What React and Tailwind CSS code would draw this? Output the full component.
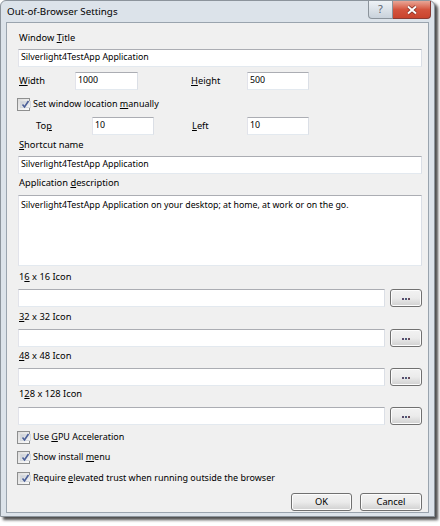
import React from 'react';

const Input = ({ value = '', className = '' }) => (
  <div className={`h-[18px] bg-white border border-[#abadb3] border-l-[#e2e3ea] border-r-[#dbdfe6] border-b-[#e3e9ef] flex items-center px-[2px] text-[8.8px] text-black ${className}`}>
    <span>{value}</span>
  </div>
);

const Check = ({ children, className = '' }) => (
  <div className={`h-4 flex items-center gap-[3px] pl-[10px] ${className}`}>
    <div className="w-[13px] h-[13px] border border-[#8e8f8f] bg-gradient-to-br from-[#dcdcdc] to-[#fbfbfb] p-[2px] flex">
      <div className="flex-1 border border-[#d5d9de] bg-gradient-to-br from-[#cbcfd5] to-[#f6f6f6] flex items-center justify-center">
        <svg width="9" height="9" viewBox="0 0 9 9">
          <path d="M1.5 4.5 L3.5 7 L7.5 1" fill="none" stroke="#4b5f98" strokeWidth="1.6" />
        </svg>
      </div>
    </div>
    <span className="text-[9px] text-black">{children}</span>
  </div>
);

const Label = ({ children, className = '' }) => (
  <div className={`h-4 flex items-center pl-[12px] text-[9.3px] text-black ${className}`}>
    <span>{children}</span>
  </div>
);

const Btn = ({ children, className = '' }) => (
  <div className={`h-[18px] rounded-[3px] border border-[#707070] bg-gradient-to-b from-[#f2f2f2] via-[#ebebeb] to-[#d0d0d0] shadow-[inset_0_0_0_1px_#fcfcfc] flex items-center justify-center text-[9.3px] text-black ${className}`}>
    {children}
  </div>
);

const icons = [
  ['1', '6', ' x 16 Icon', 'mt-[3px]', 'mt-[4px]'],
  ['', '3', '2 x 32 Icon', 'mt-[2px]', 'mt-[4px]'],
  ['', '4', '8 x 48 Icon', 'mt-[1px]', 'mt-[4px]'],
  ['1', '2', '8 x 128 Icon', 'mt-0', 'mt-[5px]'],
];

export default function App() {
  return (
    <div className="w-[440px] h-[526px] bg-white" style={{ fontFamily: '"Noto Sans", "Open Sans", sans-serif' }}>
      <div className="w-[435px] h-[517px] bg-[#dce3ea] border border-[#8c949c] rounded-t-[6px] shadow-[3px_3px_3px_rgba(0,0,0,0.7)] flex flex-col">
        <div className="h-[21px] flex items-start justify-between">
          <div className="pl-[6px] pt-[4px] text-[9.8px] text-black">Out-of-Browser Settings</div>
          <div className="flex mr-[3px]">
            <div className="w-[25px] h-[18px] border border-[#8b939b] border-t-0 rounded-bl-[4px] bg-gradient-to-b from-[#eef2f6] to-[#c9d2db] flex items-center justify-center text-[11px] text-[#5a6470]">?</div>
            <div className="w-[38px] h-[18px] border border-[#8a3b33] border-t-0 border-l-0 rounded-br-[4px] bg-gradient-to-b from-[#e8a596] via-[#d4543e] to-[#c9442e] flex items-center justify-center">
              <svg width="12" height="10" viewBox="0 0 12 10">
                <path d="M2 1.5 L10 8.5 M10 1.5 L2 8.5" stroke="#7a2a20" strokeWidth="3.4" />
                <path d="M2 1.5 L10 8.5 M10 1.5 L2 8.5" stroke="#fff" strokeWidth="2" />
              </svg>
            </div>
          </div>
        </div>
        <div className="mx-[5px] h-[491px] border border-[#9aa4ae] bg-[#f0f0f0] flex flex-col pr-[6px]">
          <Label className="mt-[7px]">Window <u>T</u>itle</Label>
          <Input className="mt-[3px] ml-[11px]" value="Silverlight4TestApp Application" />
          <div className="mt-[5px] flex items-center h-[18px] text-[9.3px]">
            <div className="w-[68px] pl-[12px]"><u>W</u>idth</div>
            <Input className="w-[63px]" value="1000" />
            <div className="w-[109px] pl-[53px]"><u>H</u>eight</div>
            <Input className="w-[62px]" value="500" />
          </div>
          <Check className="mt-[6px]">Set window location <u>m</u>anually</Check>
          <div className="mt-[5px] flex items-center h-[18px] text-[9.3px]">
            <div className="w-[85px] pl-[29px]">To<u>p</u></div>
            <Input className="w-[62px]" value="10" />
            <div className="w-[93px] pl-[38px]"><u>L</u>eft</div>
            <Input className="w-[62px]" value="10" />
          </div>
          <Label className="mt-[2px]"><u>S</u>hortcut name</Label>
          <Input className="mt-[3px] ml-[11px]" value="Silverlight4TestApp Application" />
          <Label className="mt-[1px]">Application <u>d</u>escription</Label>
          <div className="mt-[4px] ml-[11px] h-[71px] bg-white border border-[#abadb3] border-l-[#e2e3ea] border-r-[#dbdfe6] border-b-[#e3e9ef] px-[2px] pt-[3px] text-[8.8px]">
            Silverlight4TestApp Application on your desktop; at home, at work or on the go.
          </div>
          {icons.map(([a, u, b, lm, im], i) => (
            <React.Fragment key={i}>
              <Label className={lm}>{a}<u>{u}</u>{b}</Label>
              <div className={`flex items-center ml-[11px] ${im}`}>
                <Input className="flex-1" />
                <Btn className="w-[32px] ml-[5px]">
                  <div className="flex gap-[1px] mt-[1px]">
                    <span className="w-[2px] h-[2px] bg-[#5a4a6a]" />
                    <span className="w-[2px] h-[2px] bg-[#4a5a7a]" />
                    <span className="w-[2px] h-[2px] bg-[#6a4a5a]" />
                  </div>
                </Btn>
              </div>
            </React.Fragment>
          ))}
          <Check className="mt-[4px]">Use <u>G</u>PU Acceleration</Check>
          <Check className="mt-[4px]">Show install <u>m</u>enu</Check>
          <Check className="mt-[5px]">Require <u>e</u>levated trust when running outside the browser</Check>
          <div className="mt-[7px] flex justify-end gap-[8px]">
            <Btn className="w-[61px] border-[#3c7fb1] shadow-[inset_0_0_0_1px_#a6e0f8]">OK</Btn>
            <Btn className="w-[62px]">Cancel</Btn>
          </div>
        </div>
      </div>
    </div>
  );
}
